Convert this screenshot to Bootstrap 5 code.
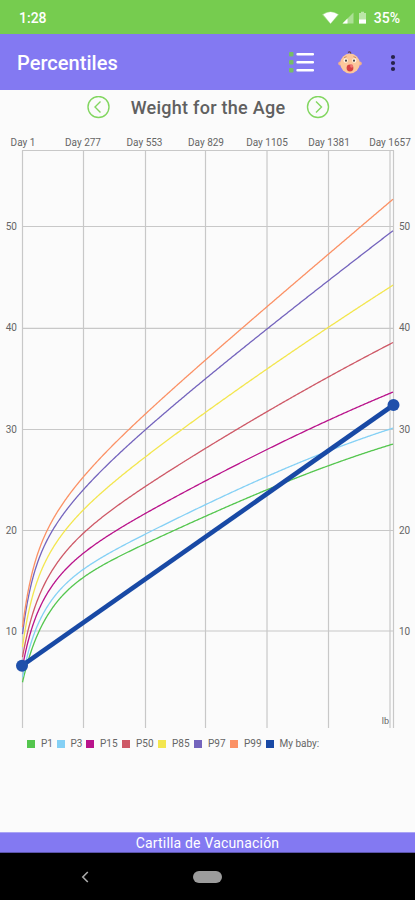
<!DOCTYPE html>
<html lang="en">
<head>
<meta charset="utf-8">
<meta name="viewport" content="width=device-width, initial-scale=1">
<title>Percentiles</title>
<link href="https://cdn.jsdelivr.net/npm/bootstrap@5.3.0/dist/css/bootstrap.min.css" rel="stylesheet">
<style>
body{font-family:Roboto,"Liberation Sans",sans-serif;background:#fbfbfb;height:900px;overflow:hidden;line-height:1}
svg{display:block;flex:none}
.status{height:34px;background:#76cc4f;font-size:14px;font-weight:500;padding:2px 15px 0 19px}
.appbar{height:56px;background:#8379f2;padding:2px 19px 0 17px}
.appbar h1{font-size:20px;font-weight:500;letter-spacing:.04px}
.icon-baby{margin:0 28px 0 24px}
.chart-title{height:34px;gap:21px;padding:1px 0 0 1px}
.chart-title h2{font-size:18px;font-weight:500;color:#606060;letter-spacing:.27px}
.plot text{font-size:10px;fill:#666}
.legend-row{height:24px;padding:1px 0 0 27px;font-size:10px;color:#666}
.swatch{width:8px;height:8px;margin-right:6px}
.footer-link{height:21px;background:#8379f2;border-top:1px solid #aaa4f5;border-bottom:1px solid #5b54aa;font-size:14px;letter-spacing:.18px}
.sysnav{height:47px;background:#000;padding-left:81px;gap:104px}
.home-pill{width:29px;height:12px;background:#9c9c9c}
</style>
<script src="https://cdn.jsdelivr.net/npm/bootstrap@5.3.0/dist/js/bootstrap.bundle.min.js"></script>
</head>
<body class="d-flex flex-column m-0">
<div class="status d-flex align-items-center text-white">
  <span>1:28</span>
  <svg class="ms-auto" width="48" height="16" viewBox="0 0 48 16">
    <path d="M0 4.500Q8.500-1.500 17 4.500L8.500 14Z" fill="#fff" opacity=".35"/>
    <path d="M1.300 4.500Q8.500-.500 16 4.500L8.500 13.500Z" fill="#fff"/>
    <path d="M20.500 13.500 31.500 2.500V13.500Z" fill="#fff" opacity=".4"/><path d="M20.500 13.500 25.500 8.500V13.500Z" fill="#fff"/>
    <path d="M37 3h2V1.700h3V3h2v10.500h-7Z" fill="#fff" opacity=".5"/><path d="M37 9.500h7v4h-7Z" fill="#fff"/>
  </svg>
  <span class="ms-1">35%</span>
</div>
<header class="appbar d-flex align-items-center text-white">
  <h1 class="m-0 me-auto">Percentiles</h1>
  <svg width="25" height="22" viewBox="0 0 25 22">
    <g fill="#78bd68"><rect x="0" y="0" width="4.500" height="4.500" rx="1"/><rect x="0" y="8" width="4.500" height="4.500" rx="1"/><rect x="0" y="16" width="4.500" height="4.500" rx="1"/></g>
    <path d="M8.500 2.300H24M8.500 10.300H24M8.500 18.300H24" stroke="#fff" stroke-width="2.400" stroke-linecap="round"/>
  </svg>
  <svg class="icon-baby" width="24" height="24" viewBox="0 0 24 24">
    <circle cx="2.200" cy="12.500" r="2" fill="#f3b08a"/><circle cx="21.800" cy="12.500" r="2" fill="#f3b08a"/>
    <ellipse cx="12" cy="12.500" rx="9.800" ry="10" fill="#fcc79b"/>
    <path d="M10 1.500Q12-.2 13 2.500" fill="none" stroke="#634052" stroke-width="1.200"/>
    <circle cx="7.700" cy="9.500" r="2.200" fill="#fff4e4"/><circle cx="16.300" cy="9.500" r="2.200" fill="#fff4e4"/>
    <circle cx="8" cy="9.700" r="1.100" fill="#4e4544"/><circle cx="16" cy="9.700" r="1.100" fill="#4e4544"/>
    <path d="M6 6.700 8.500 5.600M15.500 5.600 18 6.700" stroke="#bd8060" stroke-width=".8"/>
    <circle cx="12" cy="17" r="3.400" fill="#d64043"/><ellipse cx="13.600" cy="15" rx="1.500" ry="1.700" fill="#ef7774"/>
  </svg>
  <svg width="6" height="18" viewBox="0 0 6 18" fill="#27234a"><circle cx="3" cy="3" r="2.100"/><circle cx="3" cy="9" r="2.100"/><circle cx="3" cy="15" r="2.100"/></svg>
</header>
<div class="chart-title d-flex align-items-center justify-content-center">
  <svg width="24" height="24" viewBox="0 0 24 24" fill="none" stroke="#82d660" stroke-width="1.400"><circle cx="12.500" cy="11" r="10.500"/><path d="M14.500 5.500 9 11 14.500 16.500"/></svg>
  <h2 class="m-0">Weight for the Age</h2>
  <svg width="24" height="24" viewBox="0 0 24 24" fill="none" stroke="#82d660" stroke-width="1.400"><circle cx="12" cy="11" r="10.500"/><path d="M10 5.500 15.500 11 10 16.500"/></svg>
</div>
<svg class="plot" width="415" height="607" viewBox="0 124 415 607">
  <g stroke="#c8c8c8" stroke-width="1.200" fill="none">
    <path d="M22.500 150.500V728M83.500 150.500V728M145.500 150.500V728M205.500 150.500V728M267 150.500V728M328.500 150.500V728M390 150.500V728M393.500 150.500V728"/>
    <path d="M22 150.500H394M22 226.500H394M22 328.300H394M22 429.500H394M22 530.500H394M22 631H394"/>
  </g>
  <g text-anchor="middle"><text x="23" y="146">Day 1</text><text x="83" y="146">Day 277</text><text x="144.500" y="146">Day 553</text><text x="206" y="146">Day 829</text><text x="267" y="146">Day 1105</text><text x="329" y="146">Day 1381</text><text x="390" y="146">Day 1657</text></g>
  <g text-anchor="end"><text x="17" y="230">50</text><text x="17" y="331">40</text><text x="17" y="432.500">30</text><text x="17" y="534">20</text><text x="17" y="634.500">10</text><text x="389" y="723.500" style="font-size:9px">lb</text></g>
  <g><text x="399" y="230">50</text><text x="399" y="331">40</text><text x="399" y="432.500">30</text><text x="399" y="534">20</text><text x="399" y="634.500">10</text></g>
  <g id="curves" fill="none" stroke-width="1.300"></g>
  <path d="M22 665.700 393.500 405" stroke="#1849a5" stroke-width="4.600"/>
  <circle cx="22" cy="665.700" r="6" fill="#1f50ab"/><circle cx="393.500" cy="405" r="6" fill="#1f50ab"/>
</svg>
<div class="legend-row d-flex align-items-center" id="legend"></div>
<a class="footer-link mt-auto d-flex align-items-center justify-content-center text-white text-decoration-none" href="#">Cartilla de Vacunación</a>
<nav class="sysnav d-flex align-items-center">
  <svg width="8" height="12" viewBox="0 0 8 12" fill="none" stroke="#aaa" stroke-width="1.600"><path d="M6.800 1 1.800 6 6.800 11"/></svg>
  <div class="home-pill rounded-pill"></div>
</nav>
<script>
// name, colour, legend item width, curve points
const series = [
 ['P1','#54c64e',29.5,[22.5,682,33,647,43,623,54.7,604,68,589.500,83.5,578,110,562,154,540,205,515,267,490,328.5,466.5,393.5,443.500]],
 ['P3','#84d0f5',29.5,[22.5,677,30,647,41.3,617.500,54.7,595,68,581,83.5,570,110,554,145.5,534,205,503.5,267,476.5,328.5,452,393.500,427.500]],
 ['P15','#b9138b',36,[22.5,667,29,638,38,612,51.3,587,68,566,88.3,550,120,528.500,145.5,514,205,480,267,449.500,328.500,421,393.500,391.500]],
 ['P50','#ce5967',36,[22.5,657,31,620,41.3,590.500,54.7,566,70,547,86.7,530.500,110,511,150,484,205,448,267,411.500,328.500,377.500,393.500,342]],
 ['P85','#f3e64f',36,[22.5,647,26.300,623,33,595,43,567,59,538,83.500,509.500,110,486,150,454,205,411.500,267,369,328.500,328,393.500,284.500]],
 ['P97','#7464bd',36,[22.500,635,27,603,34,573,42.500,552,54,528.500,70,504,86,486,110,463,150,426.500,205,379,252,340,328.500,281.500,393.500,230]],
 ['P99','#fb9165',35.500,[22.500,629,25.300,605,31.300,575,40,550,52,521.500,67,496,83.500,476,110,449,145.500,414.500,205,360,267,306,328.500,255,393.500,198.500]],
 ['My baby:','#1849a5',60,[]]
];
// growth model: a quadratic trend plus three saturating terms
const basis = x => { const t=x-22.5; return [1,t/371,(t/371)**2,Math.exp(-t/9),Math.exp(-t/28),Math.exp(-t/85)]; };
function fit(points){
  const n=6, A=Array.from({length:n},()=>Array(n+1).fill(0));
  points.forEach(([x,y])=>{const b=basis(x);for(let i=0;i<n;i++){for(let j=0;j<n;j++)A[i][j]+=b[i]*b[j];A[i][n]+=b[i]*y;}});
  for(let i=3;i<n;i++)A[i][i]+=1e-5;
  for(let i=0;i<n;i++){
    let k=i; for(let r=i+1;r<n;r++) if(Math.abs(A[r][i])>Math.abs(A[k][i])) k=r;
    [A[i],A[k]]=[A[k],A[i]];
    for(let r=0;r<n;r++) if(r!==i){const f=A[r][i]/A[i][i];for(let j=i;j<=n;j++)A[r][j]-=f*A[i][j];}
  }
  const w=A.map((r,i)=>r[n]/r[i]);
  return x=>basis(x).reduce((s,v,i)=>s+v*w[i],0);
}
const curves = document.getElementById('curves'), legend = document.getElementById('legend');
series.forEach(([name,color,width,c]) => {
  if (c.length) {
    const p=[]; for(let i=0;i<c.length;i+=2)p.push([c[i],c[i+1]]);
    const f=fit(p);
    let d='';
    for(let x=22.5;x<=393.5;x+=x<80?.5:1) d+=`${d?'L':'M'}${x},${f(x).toFixed(2)}`;
    const path=document.createElementNS('http://www.w3.org/2000/svg','path');
    path.setAttribute('d',d); path.setAttribute('stroke',color); curves.append(path);
  }
  legend.insertAdjacentHTML('beforeend',`<div class="d-flex align-items-center text-nowrap" style="width:${width}px"><span class="swatch flex-shrink-0" style="background:${color}"></span>${name}</div>`);
});
</script>
</body>
</html>
